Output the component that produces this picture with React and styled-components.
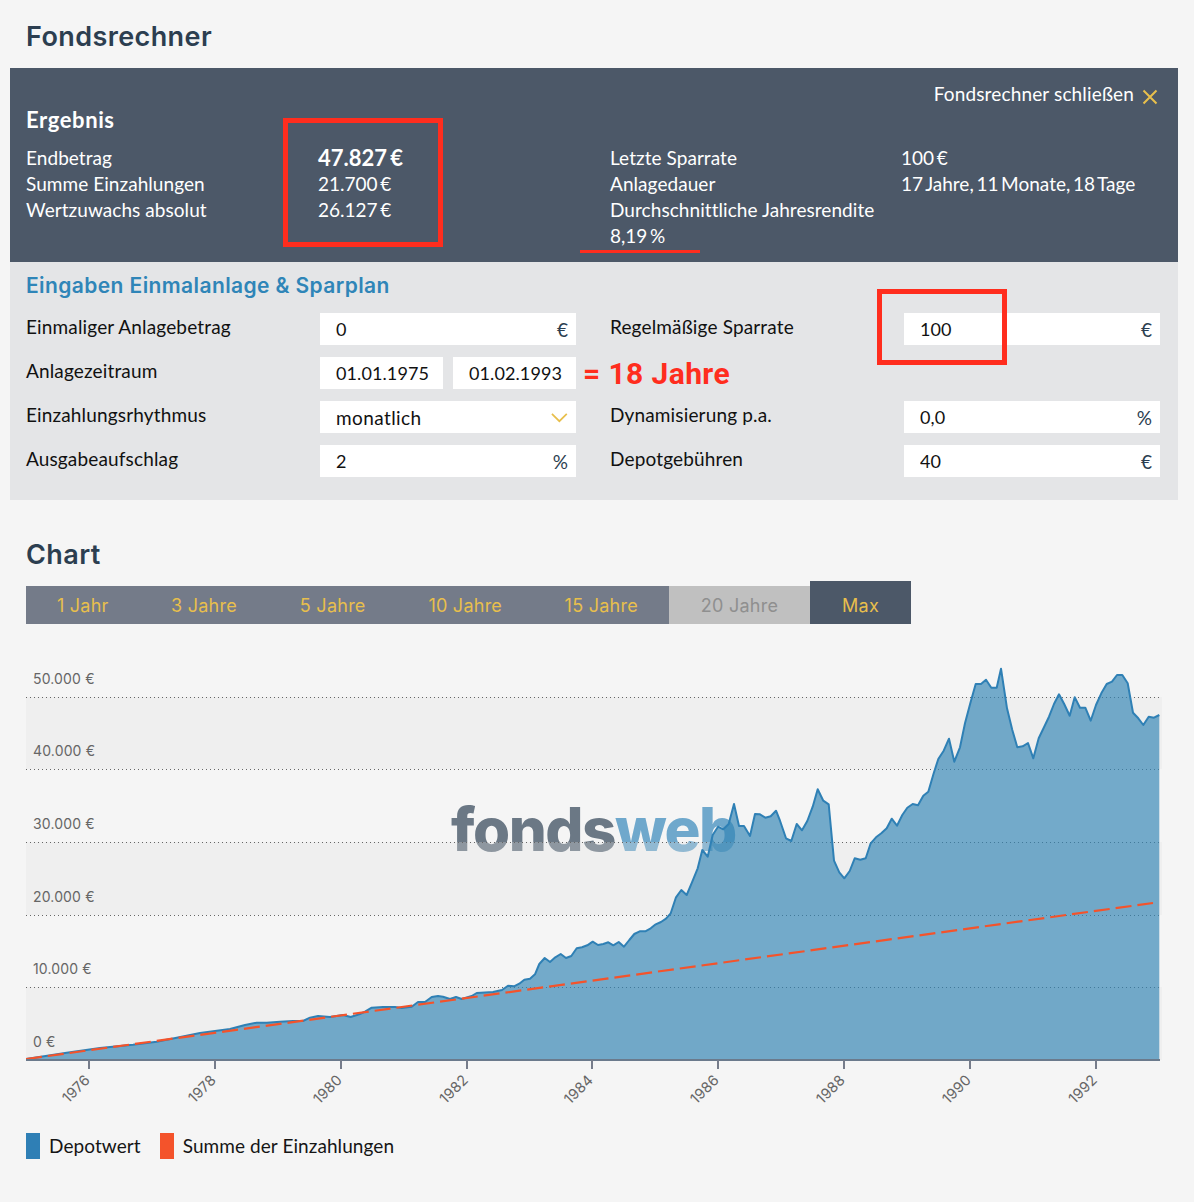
import React from 'react';
import styled, { createGlobalStyle } from 'styled-components';

const GlobalStyle = createGlobalStyle`
    html, body {
        margin: 0;
        padding: 0;
        background: #f5f5f5;
    }
    * {
        box-sizing: border-box;
    }
`;

const BODY_FONT = '"Lato", "Liberation Sans", sans-serif';
const HEAD_FONT = '"Inter", "Liberation Sans", sans-serif';
const RED = '#ff2d1e';
const YELLOW = '#e8bf4c';

const Page = styled.div`
    position: relative;
    width: 1194px;
    height: 1202px;
    overflow: hidden;
    padding: 0 16px 0 10px;
    font-family: ${BODY_FONT};
`;

const PageTitle = styled.h2`
    margin: 0;
    padding: ${({ $top }) => $top}px 0 0 16px;
    height: ${({ $height }) => $height}px;
    font-family: ${HEAD_FONT};
    font-weight: 600;
    font-size: 27px;
    line-height: 34px;
    letter-spacing: .4px;
    color: #2c3e50;
`;

const ResultPanel = styled.section`
    position: relative;
    height: 194px;
    padding: 38px 18px 0 16px;
    background: #4c5868;
    color: #fff;
`;

const CloseLink = styled.div`
    position: absolute;
    top: 13px;
    right: 20px;
    display: flex;
    align-items: center;
    gap: 8px;
    font-size: 19px;
    line-height: 26px;
    letter-spacing: .15px;
`;

const ResultTitle = styled.h3`
    margin: 0 0 11px;
    font-size: 22px;
    line-height: 28px;
    font-weight: 700;
    letter-spacing: .6px;
`;

const ResultGrid = styled.div`
    display: grid;
    grid-template-columns: 292px 292px 291px 1fr;
    font-size: 19px;
    line-height: 26px;
`;

const ResultCell = styled.div`
    font-weight: ${({ $strong }) => ($strong ? 700 : 400)};
    font-size: ${({ $strong }) => ($strong ? 22 : 19)}px;
    letter-spacing: ${({ $value }) => ($value ? 0 : .06)}px;
    word-spacing: ${({ $value }) => ($value ? -2.2 : 0)}px;
    white-space: nowrap;
`;

const FormPanel = styled.section`
    height: 238px;
    padding: 10px 18px 0 16px;
    background: #e4e5e7;
`;

const FormTitle = styled.h3`
    margin: 0 0 13px;
    font-family: ${HEAD_FONT};
    font-weight: 600;
    font-size: 21px;
    line-height: 28px;
    letter-spacing: .4px;
    color: #2f85b8;
`;

const FormGrid = styled.div`
    display: grid;
    grid-template-columns: 294px 256px 34px 294px 256px;
    grid-auto-rows: 32px;
    row-gap: 12px;
`;

const FieldLabel = styled.div`
    grid-column: ${({ $col }) => $col};
    font-size: 19px;
    line-height: 28px;
    letter-spacing: .15px;
    color: #111;
    white-space: nowrap;
`;

const FieldBox = styled.div`
    grid-column: ${({ $col }) => $col};
    display: flex;
    align-items: center;
    justify-content: space-between;
    height: 32px;
    padding: 0 8px 0 16px;
    background: #fff;
`;

const DateGroup = styled.div`
    grid-column: 2;
    display: grid;
    grid-template-columns: 123px 123px;
    column-gap: 10px;
`;

const FieldInput = styled.input`
    width: 100%;
    min-width: 0;
    padding: 0;
    border: none;
    outline: none;
    background: none;
    font-family: ${BODY_FONT};
    font-size: ${({ $num }) => ($num ? 18 : 19)}px;
    letter-spacing: ${({ $num }) => ($num ? .1 : .4)}px;
    color: #111;
`;

const Unit = styled.span`
    font-size: 19px;
    color: #2c3e50;
`;

const Annotation = styled.div`
    position: absolute;
    left: ${({ $x }) => $x}px;
    top: ${({ $y }) => $y}px;
    width: ${({ $w }) => $w}px;
    height: ${({ $h }) => $h}px;
    border: 5px solid ${RED};
`;

const AnnotationLine = styled.div`
    position: absolute;
    left: 580px;
    top: 250px;
    width: 120px;
    height: 3px;
    background: ${RED};
`;

const AnnotationText = styled.div`
    position: absolute;
    left: 583px;
    top: 354px;
    font-family: "Roboto", "Liberation Sans", sans-serif;
    font-weight: 700;
    font-size: 30px;
    line-height: 40px;
    letter-spacing: .4px;
    color: ${RED};
    white-space: nowrap;
`;

const ChartSection = styled.section`
    padding-left: 16px;
`;

const RangeBar = styled.div`
    display: flex;
    align-items: flex-end;
    height: 43px;
`;

const RangeTab = styled.div`
    display: flex;
    align-items: center;
    justify-content: center;
    width: ${({ $w }) => $w}px;
    height: ${({ $active }) => ($active ? 43 : 38)}px;
    padding-top: ${({ $active }) => ($active ? 6 : 1)}px;
    background: ${({ $active, $disabled }) => ($active ? '#4c5868' : $disabled ? '#c0c0c0' : '#747b89')};
    color: ${({ $disabled }) => ($disabled ? '#8f8f8f' : YELLOW)};
    font-family: ${HEAD_FONT};
    font-size: 18px;
    line-height: 37px;
    letter-spacing: .25px;
    white-space: nowrap;
`;

const ChartSvg = styled.svg`
    display: block;
    margin-top: 16px;
`;

const AxisText = styled.text`
    font-family: ${HEAD_FONT};
    font-size: 14px;
    letter-spacing: .15px;
    fill: #666;
`;

const YearText = styled(AxisText)`
    font-size: 14.5px;
`;

const LogoText = styled.text`
    font-family: ${HEAD_FONT};
    font-weight: 800;
    font-size: 60px;
    letter-spacing: -1.5px;
    fill: #6b7885;
`;

const Legend = styled.div`
    display: flex;
    align-items: center;
    gap: 19px;
    margin-top: 23px;
`;

const LegendItem = styled.div`
    display: flex;
    align-items: center;
    gap: 9px;
    font-size: 19px;
    line-height: 26px;
    letter-spacing: .08px;
    color: #151515;
`;

const LegendSwatch = styled.span`
    width: 14px;
    height: 26px;
    background: ${({ $color }) => $color};
`;

const CloseGlyph = styled.svg`
    margin-top: 5px;
`;

const CloseIcon = () => (
    <CloseGlyph width="16" height="16" viewBox="0 0 16 16">
        <path d="M1.5 1.5 L14.5 14.5 M14.5 1.5 L1.5 14.5" stroke={YELLOW} strokeWidth="2" fill="none" />
    </CloseGlyph>
);

const ChevronIcon = () => (
    <svg width="18" height="11" viewBox="0 0 18 11">
        <path d="M1 1.5 L9 9.5 L17 1.5" stroke={YELLOW} strokeWidth="1.8" fill="none" />
    </svg>
);

const POINTS = [
    [26, 1059], [66.7, 1052.7], [100, 1048], [133, 1044.7], [156.7, 1041.7], [176.7, 1037.7], [200, 1033],
    [230, 1029], [245, 1025], [256.7, 1022.7], [266.7, 1022.7], [280, 1021.7], [293, 1021], [303, 1021],
    [310, 1017.7], [318, 1016], [330, 1017], [343, 1015], [350.7, 1017], [360, 1014], [365, 1011.7],
    [371.7, 1007.7], [383, 1007], [395, 1007], [401.7, 1008], [411.7, 1006.7], [418, 1002], [425, 1002],
    [431.7, 997], [438, 996], [443, 996.7], [450, 999], [456, 997], [461.7, 999], [471.7, 996], [476.7, 993],
    [493, 992], [502, 990], [508, 985.7], [514, 986.3], [519.3, 983.7], [524.3, 979.7], [530, 978.7],
    [535, 974.3], [539.3, 964], [544.7, 958], [550, 962], [555.3, 957.3], [560.7, 954], [566, 958],
    [571.3, 956], [576.7, 948.3], [582, 947.3], [587.3, 945.3], [592.7, 941.7], [598, 945], [603.3, 944],
    [608.3, 942.3], [613.3, 945.3], [618.7, 942], [624, 946.7], [629.3, 940], [634.3, 934], [639.7, 931.3],
    [645.3, 931.3], [650.7, 928.3], [655.7, 924.3], [661, 922], [666, 918.7], [670.7, 913.3], [676, 897.3],
    [681.3, 890], [686.7, 895], [692.3, 881.7], [697.7, 868.3], [702.3, 850], [707.7, 856.7], [712.7, 835],
    [718, 826.7], [723.3, 829.3], [728.7, 824], [734, 804], [739, 826], [744, 826], [750, 836], [755, 814],
    [760, 814.3], [765.3, 817.7], [770.7, 816.3], [776, 810.7], [780, 820.7], [786, 838.3], [791.3, 841],
    [796.7, 824], [802, 830.3], [807.3, 821], [812.7, 806.7], [817.7, 789.3], [823.3, 800.7], [828.7, 804.3],
    [834, 860.7], [839.3, 872.3], [844.3, 878.3], [849.7, 871], [854.7, 858.3], [860.3, 859.7], [865.7, 858.3],
    [870.7, 843.3], [876, 837.3], [881.3, 833.3], [886.7, 828.3], [891.7, 818.7], [897, 825.7], [902.3, 815],
    [907.3, 807.7], [912.7, 804], [918, 805.3], [923.3, 795.7], [928.3, 791.7], [933.7, 773.3], [938.3, 759],
    [943.7, 750.7], [949, 738.7], [954.3, 761.7], [960, 747.3], [965, 723.3], [970.3, 703.3], [975.7, 684],
    [981, 684], [986, 679.7], [991.3, 687.7], [996.7, 687.7], [1001, 668.7], [1007, 708.3], [1012.3, 730],
    [1017.3, 747.3], [1022.7, 746.3], [1028, 743], [1033.3, 758.3], [1038.7, 738.3], [1044, 727.3],
    [1049, 716.7], [1054, 704], [1059, 694.3], [1064.3, 704.3], [1069.7, 715.7], [1074.7, 697.3],
    [1080, 707.7], [1085.3, 707.7], [1090.7, 720.7], [1096, 705], [1101.3, 693.3], [1106.7, 684], [1112, 681.7],
    [1117, 675], [1122.3, 675], [1127.7, 683.3], [1133, 712.7], [1138.3, 718.3], [1143.3, 725], [1148.7, 716.7],
    [1154, 717.7], [1159.3, 715],
];

const LINE = POINTS.map(([x, y]) => `${x},${y}`).join(' ');
const AREA = `26,1060 ${LINE} 1159.3,1060`;

const GRID_LINES = [697, 769, 842, 915, 987];
const BANDS = [[697, 72], [842, 73], [987, 73]];
const Y_LABELS = [
    ['50.000 €', 684], ['40.000 €', 756], ['30.000 €', 829],
    ['20.000 €', 902], ['10.000 €', 974], ['0 €', 1047],
];
const YEARS = [
    ['1976', 89], ['1978', 215], ['1980', 341], ['1982', 467], ['1984', 592],
    ['1986', 718], ['1988', 844], ['1990', 970], ['1992', 1096],
];
const RANGES = [
    ['1 Jahr', 113.5], ['3 Jahre', 129], ['5 Jahre', 128.5], ['10 Jahre', 136.5],
    ['15 Jahre', 135.5], ['20 Jahre', 141, 'disabled'], ['Max', 101, 'active'],
];

const Chart = () => (
    <ChartSvg width="1140" height="470" viewBox="26 640 1140 470">
        <LogoText x="451" y="851">
            fonds<tspan fill="#6fa8cc">web</tspan>
        </LogoText>
        {BANDS.map(([y, h]) => (
            <rect key={y} x="26" y={y} width="1136" height={h} fill="rgba(226, 226, 226, .3)" />
        ))}
        {GRID_LINES.map(y => (
            <line key={y} x1="26" x2="1160" y1={y + .5} y2={y + .5} stroke="#666" strokeDasharray="1 3" />
        ))}
        {Y_LABELS.map(([label, y]) => (
            <AxisText key={label} x="33" y={y}>{label}</AxisText>
        ))}
        <polygon points={AREA} fill="#3385b5" fillOpacity=".67" />
        <polyline points={LINE} fill="none" stroke="#2f80b5" strokeWidth="2" strokeLinejoin="round" />
        <line x1="26" y1="1059" x2="1153" y2="903" stroke="#f4532b" strokeWidth="2.2" strokeDasharray="16 6" />
        <rect x="26" y="1059" width="1134" height="2" fill="#6b7a8c" />
        {YEARS.map(([year, x]) => (
            <g key={year}>
                <rect x={x - 1} y="1060" width="2" height="9" fill="#767c8a" />
                <YearText x={x + 2} y="1081" textAnchor="end" transform={`rotate(-45 ${x + 2} 1081)`}>
                    {year}
                </YearText>
            </g>
        ))}
    </ChartSvg>
);

const App = () => (
    <Page>
        <GlobalStyle />
        <PageTitle $top={20} $height={68}>Fondsrechner</PageTitle>
        <ResultPanel>
            <CloseLink>Fondsrechner schließen <CloseIcon /></CloseLink>
            <ResultTitle>Ergebnis</ResultTitle>
            <ResultGrid>
                <ResultCell>Endbetrag</ResultCell>
                <ResultCell $value $strong>47.827 €</ResultCell>
                <ResultCell>Letzte Sparrate</ResultCell>
                <ResultCell $value>100 €</ResultCell>
                <ResultCell>Summe Einzahlungen</ResultCell>
                <ResultCell $value>21.700 €</ResultCell>
                <ResultCell>Anlagedauer</ResultCell>
                <ResultCell $value>17 Jahre, 11 Monate, 18 Tage</ResultCell>
                <ResultCell>Wertzuwachs absolut</ResultCell>
                <ResultCell $value>26.127 €</ResultCell>
                <ResultCell>Durchschnittliche Jahresrendite</ResultCell>
                <ResultCell />
                <ResultCell />
                <ResultCell />
                <ResultCell $value>8,19 %</ResultCell>
            </ResultGrid>
        </ResultPanel>
        <FormPanel>
            <FormTitle>Eingaben Einmalanlage &amp; Sparplan</FormTitle>
            <FormGrid>
                <FieldLabel $col={1}>Einmaliger Anlagebetrag</FieldLabel>
                <FieldBox $col={2}><FieldInput $num defaultValue="0" /><Unit>€</Unit></FieldBox>
                <FieldLabel $col={4}>Regelmäßige Sparrate</FieldLabel>
                <FieldBox $col={5}><FieldInput $num defaultValue="100" /><Unit>€</Unit></FieldBox>

                <FieldLabel $col={1}>Anlagezeitraum</FieldLabel>
                <DateGroup>
                    <FieldBox><FieldInput $num defaultValue="01.01.1975" /></FieldBox>
                    <FieldBox><FieldInput $num defaultValue="01.02.1993" /></FieldBox>
                </DateGroup>

                <FieldLabel $col={1}>Einzahlungsrhythmus</FieldLabel>
                <FieldBox $col={2}><FieldInput defaultValue="monatlich" /><ChevronIcon /></FieldBox>
                <FieldLabel $col={4}>Dynamisierung p.a.</FieldLabel>
                <FieldBox $col={5}><FieldInput $num defaultValue="0,0" /><Unit>%</Unit></FieldBox>

                <FieldLabel $col={1}>Ausgabeaufschlag</FieldLabel>
                <FieldBox $col={2}><FieldInput $num defaultValue="2" /><Unit>%</Unit></FieldBox>
                <FieldLabel $col={4}>Depotgebühren</FieldLabel>
                <FieldBox $col={5}><FieldInput $num defaultValue="40" /><Unit>€</Unit></FieldBox>
            </FormGrid>
        </FormPanel>
        <PageTitle $top={38} $height={81}>Chart</PageTitle>
        <ChartSection>
            <RangeBar>
                {RANGES.map(([label, w, state]) => (
                    <RangeTab key={label} $w={w} $active={state === 'active'} $disabled={state === 'disabled'}>
                        {label}
                    </RangeTab>
                ))}
            </RangeBar>
            <Chart />
            <Legend>
                <LegendItem><LegendSwatch $color="#2f7fb5" />Depotwert</LegendItem>
                <LegendItem><LegendSwatch $color="#f4532b" />Summe der Einzahlungen</LegendItem>
            </Legend>
        </ChartSection>
        <Annotation $x={283} $y={118} $w={160} $h={129} />
        <Annotation $x={877} $y={289} $w={130} $h={76} />
        <AnnotationLine />
        <AnnotationText>= 18 Jahre</AnnotationText>
    </Page>
);

export default App;
